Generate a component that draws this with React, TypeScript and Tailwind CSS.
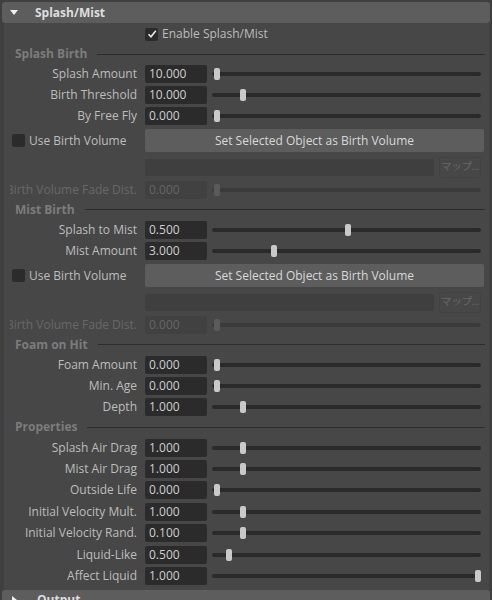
import React from 'react';

type Attr = { label: string; value: string; frac: number; disabled?: boolean };

const Check = () => (
  <svg viewBox="0 0 12 12" className="h-[12px] w-[12px]">
    <path d="M2.5 6.2 L5 8.8 L9.8 2.8" fill="none" stroke="#e8e8e8" strokeWidth="1.6" />
  </svg>
);

const CheckBox = ({ checked }: { checked?: boolean }) => (
  <div className="flex h-[13px] w-[13px] shrink-0 items-center justify-center rounded-[2px] bg-[#2b2b2b]">
    {checked && <Check />}
  </div>
);

const Slider = ({ frac, disabled }: { frac: number; disabled?: boolean }) => (
  <div className="relative ml-[5px] h-[12px] w-[269px]">
    <div
      className={`absolute left-0 right-0 top-[4px] h-[4px] rounded-full ${
        disabled ? 'bg-[#3b3b3b]' : 'bg-[#2a2a2a]'
      }`}
    />
    <div
      className={`absolute top-0 h-[12px] w-[6px] rounded-[2px] ${
        disabled ? 'bg-[#5a5a5a]' : 'bg-[#c9c9c9]'
      }`}
      style={{ left: 2 + frac * 261 }}
    />
  </div>
);

const Row = ({ label, value, frac, disabled, h = 'h-[21px]' }: Attr & { h?: string }) => (
  <div className={`flex ${h} items-center`}>
    <div
      className={`flex w-[127px] shrink-0 justify-end overflow-hidden whitespace-nowrap ${
        disabled ? 'text-[#676767]' : 'text-[#bdbdbd]'
      }`}
    >
      {label}
    </div>
    <div
      className={`ml-[8px] h-[18px] w-[62px] shrink-0 rounded-[2px] pl-[4px] leading-[18px] ${
        disabled ? 'bg-[#414141] text-[#656565]' : 'bg-[#2b2b2b] text-[#cfcfcf]'
      }`}
    >
      {value}
    </div>
    <Slider frac={frac} disabled={disabled} />
  </div>
);

const Section = ({ title, h = 'h-[19px]' }: { title: string; h?: string }) => (
  <div className={`flex ${h} items-center pl-[5px]`}>
    <span className="font-bold text-[#7c7c7c]">{title}</span>
    <div className="ml-[10px] mr-[4px] h-px flex-1 bg-[#2c2c2c]" />
  </div>
);

const BirthVolume = () => (
  <>
    <div className="flex h-[29px] items-center">
      <div className="flex w-[135px] shrink-0 items-center pl-[2px]">
        <CheckBox />
        <span className="ml-[4px] text-[#bdbdbd]">Use Birth Volume</span>
      </div>
      <div className="flex h-[23px] w-[339px] items-center justify-center rounded-[2px] bg-[#5d5d5d] text-[#d8d8d8]">
        Set Selected Object as Birth Volume
      </div>
    </div>
    <div className="flex h-[24px] items-center">
      <div className="w-[135px] shrink-0" />
      <div className="h-[17px] w-[289px] rounded-[2px] bg-[#3f3f3f]" />
      <div className="ml-[5px] flex h-[21px] w-[42px] items-center justify-center whitespace-nowrap rounded-[2px] border border-[#424242] font-['Open_Sans','Noto_Sans_CJK_JP',sans-serif] text-[10.5px] tracking-[-0.3px] text-[#686868]">
        マップ...
      </div>
    </div>
    <Row label="Birth Volume Fade Dist." value="0.000" frac={0} disabled />
  </>
);

const splashBirth: Attr[] = [
  { label: 'Splash Amount', value: '10.000', frac: 0 },
  { label: 'Birth Threshold', value: '10.000', frac: 0.1 },
  { label: 'By Free Fly', value: '0.000', frac: 0 },
];

const mistBirth: Attr[] = [
  { label: 'Splash to Mist', value: '0.500', frac: 0.5 },
  { label: 'Mist Amount', value: '3.000', frac: 0.22 },
];

const foam: Attr[] = [
  { label: 'Foam Amount', value: '0.000', frac: 0 },
  { label: 'Min. Age', value: '0.000', frac: 0 },
  { label: 'Depth', value: '1.000', frac: 0.1 },
];

const props: Attr[] = [
  { label: 'Splash Air Drag', value: '1.000', frac: 0.1 },
  { label: 'Mist Air Drag', value: '1.000', frac: 0.1 },
  { label: 'Outside Life', value: '0.000', frac: 0 },
  { label: 'Initial Velocity Mult.', value: '1.000', frac: 0.1 },
  { label: 'Initial Velocity Rand.', value: '0.100', frac: 0.1 },
  { label: 'Liquid-Like', value: '0.500', frac: 0.046 },
  { label: 'Affect Liquid', value: '1.000', frac: 1 },
];

export default function App() {
  return (
    <div className="h-[600px] w-[492px] overflow-hidden bg-[#3f3f3f] pt-[2px] font-['Open_Sans',sans-serif] text-[12px]">
      <div className="mx-[2px] flex h-[21px] items-center rounded-[3px] bg-[#5d5d5d]">
        <svg viewBox="0 0 8 5" className="ml-[8px] h-[5px] w-[8px]">
          <path d="M0 0 H8 L4 5 Z" fill="#f0f0f0" />
        </svg>
        <span className="ml-[17px] font-bold text-[#dddddd]">Splash/Mist</span>
      </div>

      <div className="ml-[4px] mr-[3px] bg-[#474747] pb-[3px] pl-[6px]">
        <div className="flex h-[22px] items-center">
          <div className="w-[135px] shrink-0" />
          <CheckBox checked />
          <span className="ml-[4px] text-[#bdbdbd]">Enable Splash/Mist</span>
        </div>

        <Section title="Splash Birth" h="h-[18px]" />
        {splashBirth.map((a) => (
          <Row key={a.label} {...a} />
        ))}
        <BirthVolume />

        <Section title="Mist Birth" />
        {mistBirth.map((a) => (
          <Row key={a.label} {...a} />
        ))}
        <BirthVolume />

        <Section title="Foam on Hit" />
        {foam.map((a) => (
          <Row key={a.label} {...a} h="h-[21.33px]" />
        ))}

        <Section title="Properties" />
        {props.map((a) => (
          <Row key={a.label} {...a} h="h-[21.4px]" />
        ))}
      </div>

      <div className="mx-[2px] flex h-[21px] items-center rounded-[3px] bg-[#5d5d5d]">
        <svg viewBox="0 0 5 8" className="ml-[10px] h-[8px] w-[5px]">
          <path d="M0 0 V8 L5 4 Z" fill="#f0f0f0" />
        </svg>
        <span className="ml-[20px] font-bold text-[#dddddd]">Output</span>
      </div>
    </div>
  );
}
